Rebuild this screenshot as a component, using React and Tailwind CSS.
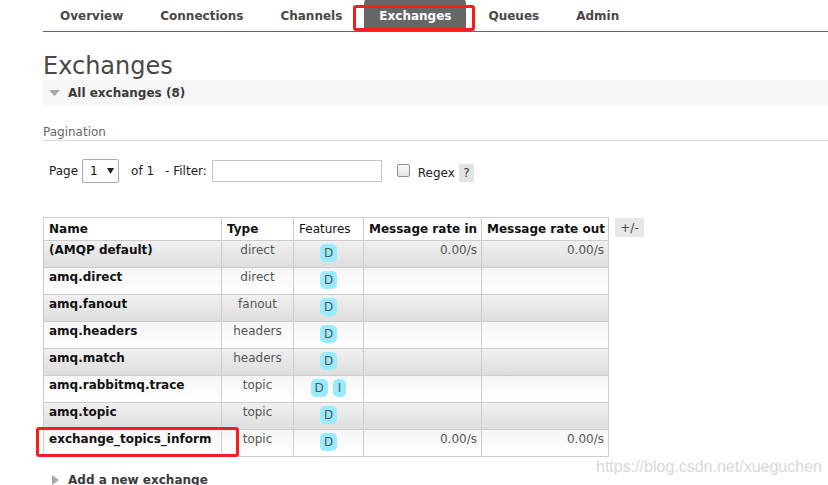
const tabs = ["Overview", "Connections", "Channels", "Exchanges", "Queues", "Admin"];

const rows = [
  { name: "(AMQP default)", type: "direct", features: ["D"], rin: "0.00/s", rout: "0.00/s" },
  { name: "amq.direct", type: "direct", features: ["D"] },
  { name: "amq.fanout", type: "fanout", features: ["D"] },
  { name: "amq.headers", type: "headers", features: ["D"] },
  { name: "amq.match", type: "headers", features: ["D"] },
  { name: "amq.rabbitmq.trace", type: "topic", features: ["D", "I"] },
  { name: "amq.topic", type: "topic", features: ["D"] },
  { name: "exchange_topics_inform", type: "topic", features: ["D"], rin: "0.00/s", rout: "0.00/s" },
];

function Badge({ label }) {
  return (
    <span
      className={
        label === "I"
          ? "inline-block h-[18px] px-[5px] rounded-[5px] bg-[#99ebff] text-[#555] text-[12px] leading-[18px]"
          : "inline-block h-[18px] px-[4px] rounded-[5px] bg-[#99ebff] text-[#555] text-[12px] leading-[18px]"
      }
    >
      {label}
    </span>
  );
}

export default function App() {
  const headCell = "h-[23px] border-r border-b border-[#ccc] bg-white pl-[5px] pt-[4px] leading-[14px] text-[12px] text-[#111]";
  return (
    <div className="relative w-[828px] h-[485px] overflow-hidden bg-white font-['DejaVu_Sans',Verdana,sans-serif] text-[12px] text-[#484848]">
      {/* Tabs */}
      <div className="ml-[43px] h-[32px] border-b border-[#666] flex gap-[7px] pl-[2px]">
        {tabs.map((t) =>
          t === "Exchanges" ? (
            <div key={t} className="-mt-[5px] px-[15px] pt-[14px] leading-[14px] font-bold text-white bg-[#666] rounded-t-[9px]">
              {t}
            </div>
          ) : (
            <div key={t} className="px-[15px] pt-[9px] leading-[14px] font-bold text-[#484848]">
              {t}
            </div>
          )
        )}
      </div>

      <div className="pl-[43px]">
        <h1 className="mt-[21px] text-[24px] leading-[27px] font-normal text-[#484848]">Exchanges</h1>

        <div className="h-[25px] bg-[#f6f6f6] flex items-center pl-[6px]">
          <svg width="11" height="6" viewBox="0 0 11 6" className="shrink-0">
            <polygon points="0,0 11,0 5.5,6" fill="#a8a8a8" />
          </svg>
          <span className="ml-[8px] font-bold text-[#3a3a3a] leading-[14px]">All exchanges (8)</span>
        </div>

        <div className="mt-[19px] h-[17px] border-b border-[#ddd] leading-[16px] text-[#666]">Pagination</div>

        {/* Page row */}
        <div className="mt-[18px] h-[24px] flex items-center pl-[6px] text-[#222] leading-[14px]">
          <span>Page</span>
          <div className="ml-[4px] w-[37px] h-[24px] border border-[#a9a9a9] rounded-[2px] bg-white flex items-center pl-[7px]">
            <span className="text-[#111]">1</span>
            <svg width="7" height="6" viewBox="0 0 7 6" className="ml-[9px]">
              <polygon points="0,0 7,0 3.5,6" fill="#222" />
            </svg>
          </div>
          <span className="ml-[12px]">of 1</span>
          <span className="ml-[11px]">- Filter:</span>
          <div className="ml-[5px] w-[170px] h-[22px] border border-[#c4c4c4] bg-white"></div>
          <div className="ml-[15px] -mt-[2px] w-[13px] h-[13px] border border-[#8f8f8f] rounded-[2px] bg-gradient-to-b from-[#fbfbfb] to-[#e4e4e4]"></div>
          <span className="ml-[8px] mt-[3px]">Regex</span>
          <div className="ml-[4px] mt-[3px] w-[15px] h-[18px] bg-[#e4e4e4] flex items-center justify-center text-[#333]">?</div>
        </div>

        {/* Table */}
        <div className="mt-[34px] flex items-start gap-[6px]">
          <div className="grid w-fit grid-cols-[178px_72px_70px_118px_127px] border-l border-t border-[#ccc]">
            <div className={headCell + " font-bold"}>Name</div>
            <div className={headCell + " font-bold"}>Type</div>
            <div className={headCell + " font-normal"}>Features</div>
            <div className={headCell + " font-bold"}>Message rate in</div>
            <div className={headCell + " font-bold"}>Message rate out</div>
            {rows.map((r, i) => {
              const bg =
                i % 2 === 0
                  ? "bg-gradient-to-b from-[#f0f0f0] to-[#dedede]"
                  : "bg-gradient-to-b from-[#f6f6f6] to-white";
              const cell = "h-[27px] border-r border-b border-[#ccc] " + bg;
              return [
                <div key={r.name + "n"} className={cell + " pl-[5px] pt-[2px] leading-[15px] font-bold text-[#111] whitespace-nowrap"}>
                  {r.name}
                </div>,
                <div key={r.name + "t"} className={cell + " pt-[2px] leading-[15px] text-center text-[#555]"}>
                  {r.type}
                </div>,
                <div key={r.name + "f"} className={cell + " pt-[3px] flex justify-center items-start gap-[5px]"}>
                  {r.features.map((f) => (
                    <Badge key={f} label={f} />
                  ))}
                </div>,
                <div key={r.name + "i"} className={cell + " pt-[2px] pr-[4px] leading-[15px] text-right text-[#555]"}>
                  {r.rin || ""}
                </div>,
                <div key={r.name + "o"} className={cell + " pt-[2px] pr-[4px] leading-[15px] text-right text-[#555]"}>
                  {r.rout || ""}
                </div>,
              ];
            })}
          </div>
          <div className="mt-[1px] w-[29px] h-[19px] bg-[#e8e8e8] flex items-center justify-center text-[#484848] leading-[14px]">
            +/-
          </div>
        </div>

        {/* Add a new exchange */}
        <div className="mt-[10px] h-[25px] flex items-center pl-[9px]">
          <svg width="7" height="10" viewBox="0 0 7 10" className="shrink-0">
            <polygon points="0,0 7,5 0,10" fill="#a8a8a8" />
          </svg>
          <span className="ml-[9px] font-bold text-[#3a3a3a] leading-[14px]">Add a new exchange</span>
        </div>
      </div>

      {/* Annotation boxes */}
      <div className="absolute left-[353px] top-[5px] w-[122px] h-[26px] border-[3px] border-[#f41e1e] rounded-[3px]"></div>
      <div className="absolute left-[36px] top-[427px] w-[203px] h-[30px] border-[3px] border-[#f41e1e] rounded-[3px]"></div>

      {/* Watermark */}
      <div className="absolute left-[596px] top-[458px] font-['Liberation_Sans',Arial,sans-serif] text-[16px] leading-[18px] text-[#d8d8d8] whitespace-nowrap">
        https://blog.csdn.net/xueguchen
      </div>
    </div>
  );
}
